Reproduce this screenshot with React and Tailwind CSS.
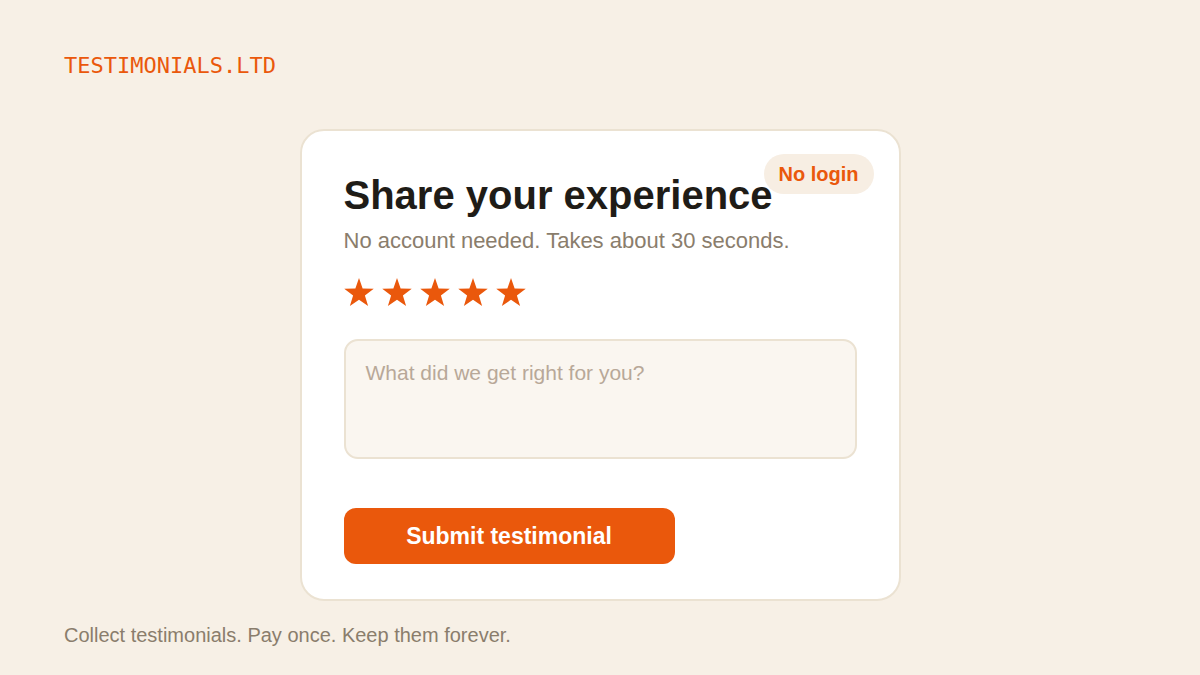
import React from "react";

const sans = { fontFamily: '"Liberation Sans", Arial, sans-serif' };

function Star() {
  return (
    <svg width="30" height="29" viewBox="0 0 30 29" className="block">
      <polygon
        fill="#ea580c"
        points="15,0 18.64,10.48 29.74,10.71 20.9,17.42 24.11,28.04 15,21.7 5.89,28.04 9.1,17.42 0.26,10.71 11.36,10.48"
      />
    </svg>
  );
}

export default function App() {
  return (
    <div className="w-[1200px] h-[675px] bg-[#f7f0e6] flex flex-col px-16 pt-[52px] overflow-hidden" style={sans}>
      <div
        className="text-[22px] leading-[28px] text-[#ea580c]"
        style={{ fontFamily: '"DejaVu Sans Mono", monospace' }}
      >
        TESTIMONIALS.LTD
      </div>

      <div className="relative mt-[49px] mx-auto w-[601px] h-[472px] bg-white border-2 border-[#ebe2d2] rounded-[24px] pl-[42px] pr-[42px] pt-[40px] flex flex-col">
        <span className="absolute top-[23px] right-[25px] h-[40px] px-[15px] flex items-center rounded-full bg-[#f7eee3] text-[20px] font-bold text-[#ea580c]">
          No login
        </span>

        <h1 className="text-[40px] leading-[48px] font-bold text-[#1f1c17]">Share your experience</h1>
        <p className="mt-[7px] text-[22px] leading-[30px] text-[#8a7d6c]">
          No account needed. Takes about 30 seconds.
        </p>

        <div className="mt-[22px] flex gap-2">
          <Star />
          <Star />
          <Star />
          <Star />
          <Star />
        </div>

        <div className="mt-[32px] h-[120px] rounded-[14px] border-2 border-[#ebe2d2] bg-[#faf6f0] px-[20px] pt-[18px] text-[21px] leading-[28px] text-[#b8a898]">
          What did we get right for you?
        </div>

        <button className="mt-[49px] w-[331px] h-[56px] rounded-[12px] bg-[#ea580c] text-white text-[23px] font-bold">
          Submit testimonial
        </button>
      </div>

      <p className="mt-[22px] text-[20px] leading-[24px] text-[#8a7d6c]">
        Collect testimonials. Pay once. Keep them forever.
      </p>
    </div>
  );
}
